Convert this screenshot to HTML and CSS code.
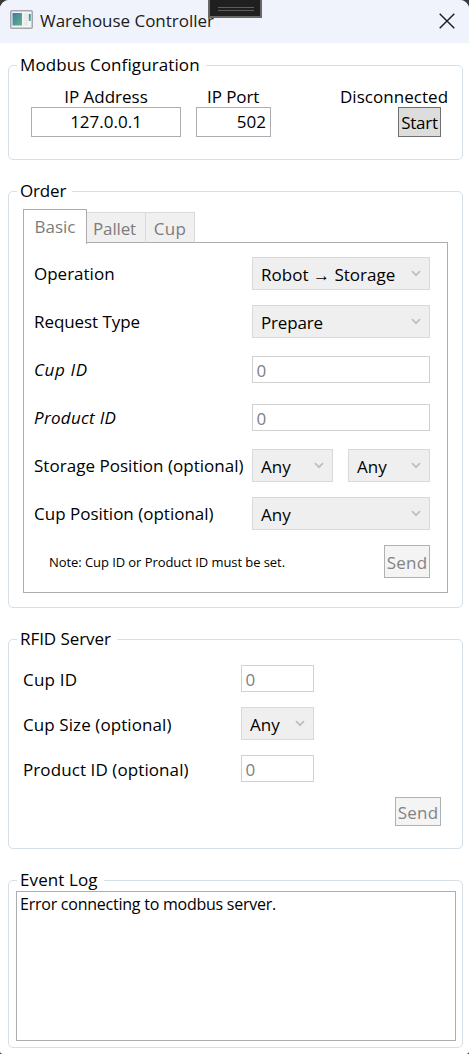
FILE: index.html
```html
<!DOCTYPE html>
<html lang="en">
<head>
<meta charset="utf-8">
<title>Warehouse Controller</title>
<link rel="stylesheet" href="styles.css">
</head>
<body>
<svg class="defs" width="0" height="0"><symbol id="chev" viewBox="0 0 10 7"><path d="M1 1.2 L5 5.2 L9 1.2" fill="none" stroke="#bfbfbf" stroke-width="1.8"/></symbol></svg>
<div class="window">
  <header class="titlebar">
    <svg class="app-icon" width="23" height="19" viewBox="0 0 23 19">
      <defs><linearGradient id="g" x1="0" y1="0" x2="1" y2="1"><stop offset="0" stop-color="#3f78a8"/><stop offset="1" stop-color="#62b583"/></linearGradient></defs>
      <rect x=".75" y=".75" width="21.5" height="17.5" rx="1" fill="#f4f5f5" stroke="#a3a7ab" stroke-width="1.5"/>
      <rect x="2.5" y="3" width="9.5" height="12.5" fill="url(#g)"/>
      <rect x="13.5" y="3" width="4.5" height="12.5" fill="#e9ebea"/>
      <rect x="18.8" y="4" width="2" height="7" fill="url(#g)"/>
    </svg>
    <h1 class="title">Warehouse Controller</h1>
    <svg class="close" width="16" height="16" viewBox="0 0 16 16"><path d="M.7 .7 L15.3 15.3 M15.3 .7 L.7 15.3" stroke="#1b1b1f" stroke-width="1.4"/></svg>
    <div class="handle"><i class="grip"></i></div>
  </header>

  <section class="group modbus">
    <h2 class="legend l-modbus">Modbus Configuration</h2>
    <div class="conn">
      <div class="field ip"><label>IP Address</label><div class="box center">127.0.0.1</div></div>
      <div class="field port"><label class="l-port">IP Port</label><div class="box right">502</div></div>
      <div class="field status"><label class="l-status">Disconnected</label><button class="btn start">Start</button></div>
    </div>
  </section>

  <section class="group order">
    <h2 class="legend l-order">Order</h2>
    <div class="tabs"><div class="tab active">Basic</div><div class="tab pallet">Pallet</div><div class="tab cup">Cup</div></div>
    <div class="panel">
      <div class="row"><span class="name">Operation</span><div class="combo wide"><span class="robot">Robot → Storage</span><svg class="chev"><use href="#chev"/></svg></div></div>
      <div class="row"><span class="name tight">Request Type</span><div class="combo wide"><span class="prep">Prepare</span><svg class="chev"><use href="#chev"/></svg></div></div>
      <div class="row"><span class="name cupid">Cup ID</span><div class="input wide">0</div></div>
      <div class="row"><span class="name prodid">Product ID</span><div class="input wide">0</div></div>
      <div class="row"><span class="name storage">Storage Position (optional)</span><div class="combo half"><span>Any</span><svg class="chev"><use href="#chev"/></svg></div><div class="combo half second"><span>Any</span><svg class="chev"><use href="#chev"/></svg></div></div>
      <div class="row"><span class="name">Cup Position (optional)</span><div class="combo wide"><span>Any</span><svg class="chev"><use href="#chev"/></svg></div></div>
      <div class="row"><span class="note">Note: Cup ID or Product ID must be set.</span><button class="btn send" disabled>Send</button></div>
    </div>
  </section>

  <section class="group rfid">
    <h2 class="legend l-rfid">RFID Server</h2>
    <div class="form">
      <div class="frow"><span class="fname f1">Cup ID</span><div class="input small">0</div></div>
      <div class="frow"><span class="fname">Cup Size (optional)</span><div class="combo small"><span>Any</span><svg class="chev"><use href="#chev"/></svg></div></div>
      <div class="frow"><span class="fname">Product ID (optional)</span><div class="input small">0</div></div>
      <button class="btn send low" disabled>Send</button>
    </div>
  </section>

  <section class="group log">
    <h2 class="legend l-log">Event Log</h2>
    <div class="logbox">Error connecting to modbus server.</div>
  </section>
</div>
</body>
</html>
```

FILE: styles.css
```css
* { box-sizing: border-box; }
body { margin: 0; background: #3a3a3c; font: 17px/24px "Open Sans", "Noto Sans", sans-serif; color: #000; }
.defs { display: block; height: 0; }
.window { height: 1054px; background: #fff; border-radius: 9px 9px 3px 3px; overflow: hidden; }

.titlebar { position: relative; display: flex; height: 43px; padding-left: 10px; background: #f0f3fb; }
.app-icon { margin-top: 10px; }
.title { margin: 9px 0 0 7px; font-size: 17px; font-weight: 400; line-height: 24px; letter-spacing: -.03px; color: #1b1b1b; }
.close { margin: 13px 14px 0 auto; }
.handle { position: absolute; left: 208px; top: 0; width: 54px; height: 18px; background: #1f1f1f; border: 2px solid #686868; border-top: 0; }
.grip { display: block; width: 36px; height: 4px; margin: 7px 0 0 8px; border: solid #5c5c5c; border-width: 1px 0; }

.group { width: 455px; margin-left: 8px; border: 1px solid #d5dfe5; border-radius: 5px; }
.legend { width: fit-content; height: 24px; margin: -13px 0 0 8px; padding: 0 6px 0 3px; background: #fff; font-size: 17px; font-weight: 400; line-height: 24px; white-space: nowrap; }
.l-modbus { letter-spacing: .1px; }
.l-order { letter-spacing: -.15px; }
.l-rfid { letter-spacing: -.06px; }
.l-log { letter-spacing: .1px; }

.modbus { height: 95px; margin-top: 22px; }
.conn { display: flex; padding: 6px 0 0 22px; }
.field { display: flex; flex-direction: column; }
.field label { height: 24px; line-height: 28px; }
.ip { width: 150px; text-align: center; }
.port { width: 75px; margin-left: 15px; }
.l-port { margin-left: 11px; letter-spacing: -.08px; }
.status { width: 109px; margin-left: 69px; }
.l-status { letter-spacing: .04px; }
.box { height: 30px; border: 1px solid #abadb3; line-height: 28px; }
.right { padding-right: 4px; text-align: right; }

.btn { padding: 0; background: #ddd; border: 1px solid #707070; border-radius: 0; font: inherit; color: #000; }
.start { width: 43px; height: 30px; padding-top: 2px; margin-left: 58px; letter-spacing: -.3px; line-height: 26px; }
.send { width: 46px; height: 33px; background: #f4f4f4; border-color: #adb2b5; color: #838383; letter-spacing: .2px; line-height: 33px; }

.order { height: 417px; margin-top: 31px; }
.tabs { position: relative; z-index: 1; display: flex; align-items: flex-end; height: 34px; margin: 6px 0 0 14px; color: #7c7c7c; }
.tab { height: 31px; background: #f0f0f0; border: 1px solid #d9d9d9; border-bottom-color: #acacac; line-height: 32px; text-align: center; }
.active { width: 64px; height: 35px; margin-bottom: -1px; background: #fff; border-color: #acacac; border-bottom: 0; line-height: 34px; }
.pallet { width: 59px; padding-right: 3px; border-left: 0; letter-spacing: -.16px; }
.cup { width: 49px; border-left: 0; letter-spacing: .3px; }
.panel { width: 425px; height: 351px; margin: -1px 0 0 14px; padding: 6px 17px 0 10px; border: 1px solid #acacac; }
.row { display: flex; align-items: center; height: 48px; white-space: nowrap; }
.name { width: 218px; padding-top: 2px; }
.tight { letter-spacing: -.07px; }
.storage { letter-spacing: .03px; }
.cupid { font-style: italic; letter-spacing: .6px; }
.prodid { font-style: italic; letter-spacing: .3px; }
.combo { display: flex; align-items: flex-start; justify-content: space-between; height: 33px; padding: 0 8px; background: #efefef; border: 1px solid #d9d9d9; line-height: 34px; }
.chev { width: 10px; height: 7px; margin-top: 12px; }
.robot { letter-spacing: .02px; }
.prep { letter-spacing: -.17px; }
.input { height: 27px; padding-left: 3.5px; border: 1px solid #d0d1d4; line-height: 27px; color: #808080; }
.wide { width: 178px; }
.half { width: 81px; }
.second { width: 82px; margin-left: 15px; }
.note { width: 350px; padding: 2px 0 0 15px; font-size: 13px; letter-spacing: -.07px; }

.rfid { height: 210px; margin-top: 31px; }
.form { display: flex; flex-direction: column; padding: 5px 21px 0 14px; }
.frow { display: flex; align-items: center; height: 45px; white-space: nowrap; }
.fname { width: 218px; padding-top: 2px; letter-spacing: .09px; }
.f1 { letter-spacing: .2px; }
.small { width: 73px; }
.low { align-self: flex-end; height: 29px; margin-top: 6px; line-height: 29px; }

.log { height: 168px; margin-top: 31px; }
.logbox { width: 440px; height: 150px; margin: -1px 0 0 7px; padding-left: 3px; border: 1px solid #abadb3; font-size: 16px; letter-spacing: -.24px; line-height: 25px; }
```
